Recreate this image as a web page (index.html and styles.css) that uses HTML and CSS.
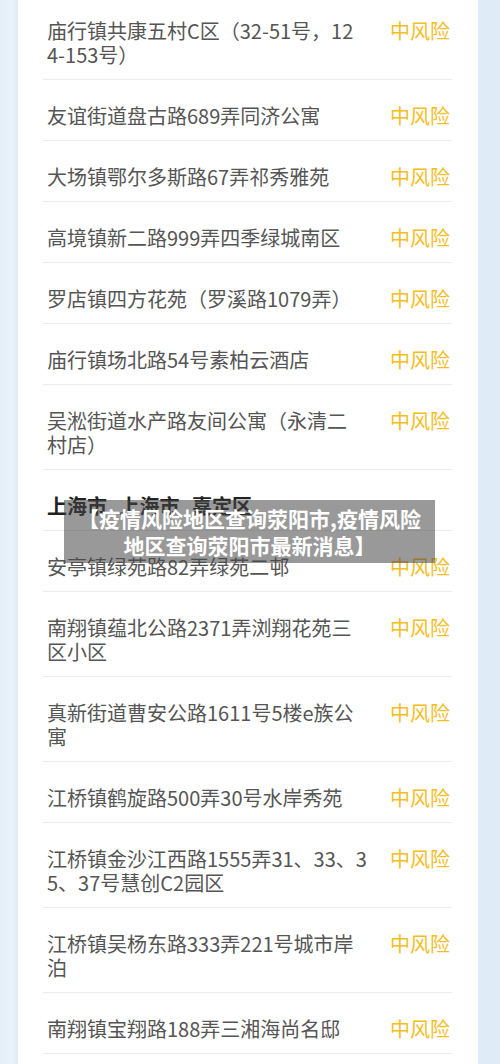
FILE: index.html
```html
<!DOCTYPE html>
<html lang="zh-CN">
<head>
<meta charset="utf-8">
<title>疫情风险地区查询荥阳市</title>
<link rel="stylesheet" href="styles.css">
</head>
<body>
<div class="page">
  <div class="card">
    <ul class="list">
      <li class="row"><span class="addr">庙行镇共康五村C区（32-51号，12<br>4-153号）</span><span class="risk">中风险</span></li>
      <li class="row"><span class="addr">友谊街道盘古路689弄同济公寓</span><span class="risk">中风险</span></li>
      <li class="row"><span class="addr">大场镇鄂尔多斯路67弄祁秀雅苑</span><span class="risk">中风险</span></li>
      <li class="row"><span class="addr">高境镇新二路999弄四季绿城南区</span><span class="risk">中风险</span></li>
      <li class="row"><span class="addr">罗店镇四方花苑（罗溪路1079弄）</span><span class="risk">中风险</span></li>
      <li class="row"><span class="addr">庙行镇场北路54号素柏云酒店</span><span class="risk">中风险</span></li>
      <li class="row"><span class="addr">吴淞街道水产路友间公寓（永清二<br>村店）</span><span class="risk">中风险</span></li>
      <li class="row heading"><span class="region">上海市 上海市 嘉定区</span></li>
      <li class="row"><span class="addr">安亭镇绿苑路82弄绿苑二邨</span><span class="risk">中风险</span></li>
      <li class="row"><span class="addr">南翔镇蕴北公路2371弄浏翔花苑三<br>区小区</span><span class="risk">中风险</span></li>
      <li class="row"><span class="addr">真新街道曹安公路1611号5楼e族公<br>寓</span><span class="risk">中风险</span></li>
      <li class="row"><span class="addr">江桥镇鹤旋路500弄30号水岸秀苑</span><span class="risk">中风险</span></li>
      <li class="row"><span class="addr">江桥镇金沙江西路1555弄31、33、3<br>5、37号慧创C2园区</span><span class="risk">中风险</span></li>
      <li class="row"><span class="addr">江桥镇吴杨东路333弄221号城市岸<br>泊</span><span class="risk">中风险</span></li>
      <li class="row"><span class="addr">南翔镇宝翔路188弄三湘海尚名邸</span><span class="risk">中风险</span></li>
    </ul>
  </div>
  <div class="banner">【疫情风险地区查询荥阳市,疫情风险<br>地区查询荥阳市最新消息】</div>
</div>
</body>
</html>
```

FILE: styles.css
```css
html, body {
  margin: 0;
  padding: 0;
  background: #e6f1fa;
}

body {
  font-family: "Noto Sans CJK SC", "Noto Sans", sans-serif;
  overflow: hidden;
}

.page {
  position: relative;
  height: 1064px;
  padding: 0 22px 0 18px;
  background: linear-gradient(90deg, #e3eff9 0, #e8f3fb 12px, #dfebf6 18px);
}

.card {
  background: #ffffff;
  height: 100%;
  padding: 0 26px 0 25px;
  overflow: hidden;
}

.list {
  list-style: none;
  margin: -5px 0 0;
  padding: 0;
}

.row {
  display: flex;
  align-items: flex-start;
  justify-content: space-between;
  padding: 24px 2px 12px 4px;
  border-bottom: 1px solid #ececec;
  font-size: 20px;
  line-height: 24px;
}

.addr {
  color: #555555;
  white-space: nowrap;
}

.risk {
  color: #f5bd1f;
  white-space: nowrap;
}

.region {
  color: #222222;
  font-weight: 700;
  word-spacing: 8px;
}

.banner {
  position: absolute;
  left: 64px;
  top: 500px;
  width: 371px;
  height: 63px;
  box-sizing: border-box;
  padding-top: 5px;
  background: rgba(70, 70, 70, 0.55);
  color: #ffffff;
  font-size: 21px;
  font-weight: 700;
  line-height: 27px;
  text-align: center;
}
```
